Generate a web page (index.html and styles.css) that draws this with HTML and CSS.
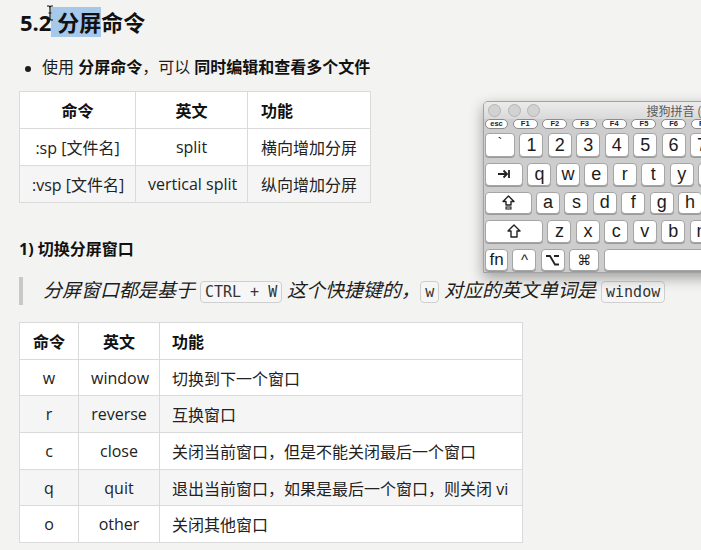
FILE: index.html
```html
<!DOCTYPE html>
<html lang="zh-CN">
<head>
<meta charset="utf-8">
<title>5.2 分屏命令</title>
<link rel="stylesheet" href="styles.css">
</head>
<body>
<main class="doc">
  <h2 class="title">5.2<span class="sel"> 分屏</span>命令</h2>
  <ul class="bullets">
    <li><span>使用 <strong>分屏命令</strong>，可以 <strong>同时编辑和查看多个文件</strong></span></li>
  </ul>
  <table class="tbl tbl1">
    <colgroup><col class="a"><col class="b"><col class="c"></colgroup>
    <thead>
      <tr><th>命令</th><th>英文</th><th class="left">功能</th></tr>
    </thead>
    <tbody>
      <tr><td>:sp [文件名]</td><td>split</td><td class="left">横向增加分屏</td></tr>
      <tr><td>:vsp [文件名]</td><td>vertical split</td><td class="left">纵向增加分屏</td></tr>
    </tbody>
  </table>
  <h4 class="sub">1) 切换分屏窗口</h4>
  <blockquote class="quote">
    <p>分屏窗口都是基于 <code>CTRL + W</code> 这个快捷键的，<code>w</code> 对应的英文单词是 <code>window</code></p>
  </blockquote>
  <table class="tbl tbl2">
    <colgroup><col class="a"><col class="b"><col class="c"></colgroup>
    <thead>
      <tr><th>命令</th><th>英文</th><th class="left">功能</th></tr>
    </thead>
    <tbody>
      <tr><td>w</td><td>window</td><td class="left">切换到下一个窗口</td></tr>
      <tr><td>r</td><td>reverse</td><td class="left">互换窗口</td></tr>
      <tr><td>c</td><td>close</td><td class="left">关闭当前窗口，但是不能关闭最后一个窗口</td></tr>
      <tr><td>q</td><td>quit</td><td class="left">退出当前窗口，如果是最后一个窗口，则关闭 vi</td></tr>
      <tr><td>o</td><td>other</td><td class="left">关闭其他窗口</td></tr>
    </tbody>
  </table>
</main>

<svg class="ibeam" width="8" height="16" viewBox="0 0 8 16" aria-hidden="true">
  <path d="M1 1 H3 Q4 1.5 4 3 V13 Q4 14.5 3 15 H1 M7 1 H5 Q4 1.5 4 3 M4 13 Q4 14.5 5 15 H7 M2.5 8 H5.5" fill="none" stroke="#111" stroke-width="1.2"/>
</svg>

<div class="kbd">
  <div class="kbd-title">
    <span class="light"></span><span class="light"></span><span class="light"></span>
    <span class="kbd-name">搜狗拼音 (</span>
  </div>
  <div class="kbd-body">
    <div class="frow">
      <span class="fkey esc">esc</span><span class="fkey">F1</span><span class="fkey">F2</span><span class="fkey">F3</span><span class="fkey">F4</span><span class="fkey">F5</span><span class="fkey">F6</span><span class="fkey">F7</span>
    </div>
    <div class="krow num">
      <span class="key tick">`</span><span class="key">1</span><span class="key">2</span><span class="key">3</span><span class="key">4</span><span class="key">5</span><span class="key">6</span><span class="key">7</span>
    </div>
    <div class="krow">
      <span class="key tab"><svg width="14" height="12" viewBox="0 0 14 12"><path d="M1 6 H10 M6.5 2.5 L10 6 L6.5 9.5 M12 2 V10" fill="none" stroke="#222" stroke-width="1.8"/></svg></span><span class="key">q</span><span class="key">w</span><span class="key">e</span><span class="key">r</span><span class="key">t</span><span class="key">y</span><span class="key">u</span>
    </div>
    <div class="krow">
      <span class="key caps"><svg width="13" height="15" viewBox="0 0 13 15"><path d="M6.5 1 L12 6.5 H9 V10 H4 V6.5 H1 Z" fill="none" stroke="#222" stroke-width="1.4" stroke-linejoin="round"/><rect x="4" y="12" width="5" height="2" fill="none" stroke="#222" stroke-width="1.1"/></svg></span><span class="key">a</span><span class="key">s</span><span class="key">d</span><span class="key">f</span><span class="key">g</span><span class="key">h</span><span class="key">j</span>
    </div>
    <div class="krow">
      <span class="key shift"><svg width="14" height="14" viewBox="0 0 14 14"><path d="M7 1 L13 7 H10 V13 H4 V7 H1 Z" fill="none" stroke="#222" stroke-width="1.4" stroke-linejoin="round"/></svg></span><span class="key">z</span><span class="key">x</span><span class="key">c</span><span class="key">v</span><span class="key">b</span><span class="key">n</span>
    </div>
    <div class="krow">
      <span class="key fn">fn</span><span class="key ctl">^</span><span class="key opt"><svg width="15" height="12" viewBox="0 0 15 12"><path d="M1 2 H5 L10 10.5 H14 M9 2 H14" fill="none" stroke="#222" stroke-width="1.8"/></svg></span><span class="key cmd">⌘</span><span class="key space"></span>
    </div>
  </div>
</div>
</body>
</html>
```

FILE: styles.css
```css
html, body {
  margin: 0;
  height: 100%;
  overflow: hidden;
}

body {
  position: relative;
  background: #f3f3f2;
  font-family: "Open Sans", "Noto Sans CJK SC", sans-serif;
  color: #222;
}

.doc {
  padding-left: 19px;
}

.title {
  margin: 10px 0 0;
  padding-left: 1px;
  font-size: 22px;
  line-height: 24px;
  font-weight: 700;
  color: #111;
}

.sel {
  background: #a6c8ea;
}

.ibeam {
  position: absolute;
  left: 46px;
  top: 5px;
}

.bullets {
  list-style: none;
  margin: 20.5px 0 0;
  padding: 0;
  font-size: 16px;
  line-height: 24px;
  color: #1c1c1c;
}

.bullets li {
  display: flex;
  align-items: flex-start;
  gap: 11px;
}

.bullets li::before {
  content: "";
  flex: none;
  width: 6px;
  height: 6px;
  margin: 11px 0 0 6px;
  border-radius: 50%;
  background: #1c1c1c;
}

.bullets strong {
  font-weight: 700;
  color: #111;
}

.tbl {
  border-collapse: collapse;
  table-layout: fixed;
  background: #fff;
  font-size: 16px;
  color: #222;
}

.tbl th,
.tbl td {
  border: 1px solid #dadada;
  padding: 0 12px;
  text-align: center;
  vertical-align: middle;
  white-space: nowrap;
}

.tbl th {
  font-weight: 700;
  color: #111;
}

.tbl .left {
  text-align: left;
}

.tbl tbody tr:nth-child(even) {
  background: #f5f5f5;
}

.tbl1 {
  margin-top: 12.5px;
  width: 352px;
}

.tbl1 tr {
  height: 37px;
}

.tbl1 col.a { width: 116px; }
.tbl1 col.b { width: 112px; }
.tbl1 .left { padding-left: 13px; }

.sub {
  margin: 35px 0 0;
  font-size: 16px;
  line-height: 22px;
  font-weight: 700;
  color: #111;
}

.quote {
  margin: 17px 0 0;
  border-left: 4px solid #c8c8c8;
  padding-left: 20px;
}

.quote p {
  margin: 0;
  font-size: 19px;
  line-height: 26px;
  font-style: italic;
  color: #1c1c1c;
  white-space: nowrap;
}

.quote code {
  font-family: "DejaVu Sans Mono", "Liberation Mono", monospace;
  font-size: 15px;
  font-style: normal;
  color: #333;
  background: #f6f6f6;
  border: 1px solid #cfcfcf;
  border-radius: 4px;
  padding: 1px 4px;
}

.tbl2 {
  margin-top: 17px;
  width: 504px;
}

.tbl2 tr {
  height: 36.7px;
}

.tbl2 col.a { width: 59px; }
.tbl2 col.b { width: 81px; }

/* keyboard viewer window */
.kbd {
  position: absolute;
  left: 483px;
  top: 101px;
  width: 240px;
  height: 170px;
  background: #cdcdcd;
  border: 1px solid #a2a2a2;
  border-radius: 5px 5px 0 0;
  box-shadow: 0 5px 14px rgba(0, 0, 0, 0.35);
  overflow: hidden;
  font-family: "Liberation Sans", "DejaVu Sans", sans-serif;
}

.kbd-title {
  height: 17px;
  display: flex;
  align-items: center;
  gap: 6.5px;
  padding-left: 4px;
  background: linear-gradient(#ececec, #d9d9d9);
}

.light {
  width: 11px;
  height: 11px;
  border-radius: 50%;
  background: #d2d2d2;
  border: 0.5px solid #b5b5b5;
}

.kbd-name {
  margin-left: 100px;
  font-family: "Noto Sans CJK SC", sans-serif;
  font-size: 12px;
  color: #5a5a5a;
  white-space: nowrap;
}

.kbd-body {
  padding-left: 1px;
}

.frow {
  display: flex;
  gap: 4.7px;
  height: 10px;
}

.fkey {
  flex: none;
  width: 25px;
  height: 10px;
  box-sizing: border-box;
  border: 1px solid #8a8a8a;
  border-radius: 5px;
  background: #fff;
  font-size: 7.5px;
  font-weight: 700;
  line-height: 8px;
  text-align: center;
  color: #222;
}

.fkey.esc {
  width: 23px;
}

.krow {
  display: flex;
  gap: 4.45px;
  height: 22.5px;
  margin-top: 6px;
}

.krow.num {
  height: 24px;
  margin-top: 4px;
}

.key {
  flex: none;
  width: 24px;
  box-sizing: border-box;
  display: flex;
  align-items: center;
  justify-content: center;
  background: #fff;
  border: 1px solid #a5a5a5;
  border-radius: 4px;
  box-shadow: 0 1px 0 #9a9a9a;
  font-size: 18px;
  color: #1c1c1c;
}

.key.tick { width: 30px; font-size: 15px; padding-bottom: 6px; }
.key.tab { width: 38px; }
.key.caps { width: 46.5px; }
.key.shift { width: 58px; }
.key.fn { width: 23px; font-size: 17px; }
.key.ctl { font-size: 15px; }
.key.cmd { width: 30px; font-family: "DejaVu Sans", sans-serif; font-size: 14px; }
.key.space { width: 120px; }
```
